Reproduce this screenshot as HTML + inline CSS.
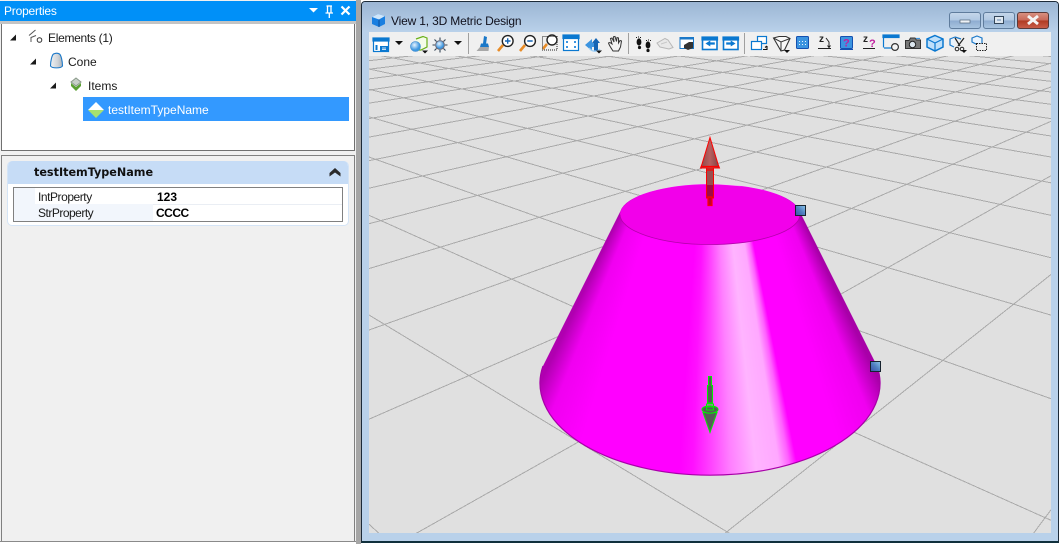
<!DOCTYPE html>
<html><head><meta charset="utf-8"><title>View 1, 3D Metric Design</title>
<style>
html,body{margin:0;padding:0;background:#fff;width:1059px;height:544px;overflow:hidden}
#root{position:relative;width:1059px;height:544px;overflow:hidden;background:#fff;font:12px "Liberation Sans",sans-serif;color:#1a1a1a}
#root div{position:absolute;box-sizing:border-box}
.t{white-space:nowrap;line-height:16px;height:16px}
svg{position:absolute;left:0;top:0}
</style></head><body>
<div id="root">
<!-- left panel -->
<div style="left:0;top:0;width:356px;height:542px;background:#f0f0f0;border-bottom:1px solid #8a8a8a"></div>
<div style="left:0;top:1px;width:356px;height:20px;background:#0090f8"></div>
<div class="t" style="left:4px;top:3px;color:#fff;letter-spacing:-.2px">Properties</div>
<div style="left:0;top:21px;width:356px;height:3px;background:#c4c4c4"></div>
<div style="left:1px;top:24px;width:354px;height:127px;background:#fff;border:1px solid #707070;border-top:0"></div>
<div style="left:83px;top:97px;width:266px;height:24px;background:#3399ff"></div>
<div class="t" style="left:48px;top:30px;letter-spacing:-.3px">Elements (1)</div>
<div class="t" style="left:68px;top:54px">Cone</div>
<div class="t" style="left:88px;top:78px">Items</div>
<div class="t" style="left:108px;top:102px;color:#fff">testItemTypeName</div>
<div style="left:1px;top:155px;width:354px;height:386px;background:#f0f0f0;border:1px solid #808080;border-bottom:0"></div>
<div style="left:7px;top:161px;width:342px;height:65px;background:#fff;border:1px solid #d4e4f6;border-radius:5px"></div>
<div style="left:8px;top:161px;width:340px;height:23px;background:#c6dcf6;border-radius:5px 5px 0 0"></div>
<div class="t" style="left:34px;top:165px;font:bold 11.2px/16px 'DejaVu Sans',sans-serif;color:#111">testItemTypeName</div>
<div style="left:13px;top:187px;width:330px;height:35px;border:1px solid #808080;background:#fff"></div>
<div style="left:14px;top:188px;width:21px;height:33px;background:#f2f6fc"></div>
<div style="left:35px;top:204px;width:118px;height:17px;background:#f2f6fc"></div>
<div style="left:153px;top:204px;width:189px;height:1px;background:#eaeef4"></div>
<div class="t" style="left:38px;top:189px;letter-spacing:-.45px">IntProperty</div>
<div class="t" style="left:38px;top:205px;letter-spacing:-.5px">StrProperty</div>
<div class="t" style="left:157px;top:189px;font-weight:bold;color:#000">123</div>
<div class="t" style="left:156px;top:205px;font-weight:bold;color:#000;letter-spacing:-.5px">CCCC</div>
<!-- gap -->
<div style="left:356px;top:0;width:5px;height:544px;background:#a6a6a6"></div>
<!-- window -->
<div style="left:361px;top:1px;width:698px;height:542px;border:1px solid #1c2a38;border-bottom:2px solid #10303c;border-radius:4px 4px 0 0;background:#b9d1ea"></div>
<div style="left:362px;top:2px;width:696px;height:30px;background:linear-gradient(#9cb6d4,#b9d1ea);border-radius:3px 3px 0 0"></div>
<div class="t" style="left:391px;top:13px;color:#10101c;letter-spacing:-.17px">View 1, 3D Metric Design</div>
<div style="left:949px;top:12px;width:32px;height:17px;border:1px solid #5f7c9c;border-radius:3px;background:linear-gradient(#c4d6ea 0,#b0c8e2 48%,#8eacd0 52%,#a8c4e0 100%)"></div>
<div style="left:983px;top:12px;width:32px;height:17px;border:1px solid #5f7c9c;border-radius:3px;background:linear-gradient(#c4d6ea 0,#b0c8e2 48%,#8eacd0 52%,#a8c4e0 100%)"></div>
<div style="left:1017px;top:12px;width:32px;height:17px;border:1px solid #5a3a3a;border-radius:3px;background:linear-gradient(#d89080 0,#c86858 48%,#b03a22 52%,#c85c48 100%)"></div>
<div style="left:369px;top:32px;width:682px;height:24px;background:#f0f0f0"></div>
<div style="left:369px;top:56px;width:682px;height:477px;background:#e0e0e0"></div>
<!-- grid -->
<svg width="1059" height="544" style="clip-path:inset(56px 8px 11px 369px)">
<g stroke="#aaaaaa" stroke-width="1" fill="none" shape-rendering="crispEdges">
<path d="M369 524.1L386 540M369 315L740.5 540M369 215.3L1051 520.3M369 157L1051 398.7M369 116.8L1051 315.1M369 89.3L1051 257.7M369 69L1051 215.3M369 53.4L1051 182.8M369 41L1051 157M369 30.9L1051 136M369 22.6L1051 118.6M369 15.7L1051 104.3M369 9.8L1051 92M369 4.7L1051 81.3M369 .2L1051 72M369 -3.7L1051 63.8M369 -7.2L1051 56.5"/>
<path d="M1028.5 540L1051 509.8M716.5 540L1051 274.5M404.4 540L1051 175.7M369 419.2L1051 121.3M369 330L1051 87M369 268.6L1051 63.2M369 223.7L1051 45.9M369 188.2L1051 32.2M369 160.7L1051 21.6M369 137.1L1051 12.4M369 118.6L1051 5.3M369 103.1L1051 -.7M369 90L1051 -5.7M369 78.9L1051 -10M369 69.2L1051 -13.8M369 60.7L1051 -17"/>
</g></svg>
<!-- cone body -->
<div style="left:0;top:0;width:1059px;height:544px;clip-path:path('M620.5 211L543 366A170 92 0 1 0 877 366L799.5 211A90 30 0 0 0 620.5 211Z');background:conic-gradient(from 150deg at 710px 24px,#a800a8 4.67deg,#f000f0 7.8deg,#ff00ff 12.9deg,#ff00ff 18.8deg,#ff60ff 19.8deg,#ffa8ff 21.1deg,#ffb4ff 24.1deg,#ff80ff 27.3deg,#ff40ff 30deg,#ff10ff 32.2deg,#ff00ff 34deg,#ff00ff 47.1deg,#f000f0 52.2deg,#b000b0 55.3deg)"></div>
<svg width="1059" height="544">
<defs>
<linearGradient id="h" x1="0" x2="1" y1="1" y2="0"><stop offset="0" stop-color="#3a50a8"/><stop offset=".5" stop-color="#4f80c0"/><stop offset="1" stop-color="#8cc8ec"/></linearGradient>
<radialGradient id="s" cx=".4" cy=".35"><stop offset="0" stop-color="#e8f4ff"/><stop offset="1" stop-color="#3d96e0"/></radialGradient>
<linearGradient id="ra" x1="0" x2="1"><stop offset="0" stop-color="#8a4848"/><stop offset=".5" stop-color="#b86060"/><stop offset="1" stop-color="#7c4040"/></linearGradient>
<linearGradient id="cn" x1="0" x2="1"><stop offset="0" stop-color="#f0f2f4"/><stop offset=".6" stop-color="#d0d4d8"/><stop offset="1" stop-color="#a8b0b8"/></linearGradient>
</defs>
<path d="M543 366A170 92 0 1 0 877 366" fill="none" stroke="#a800a8" stroke-width="1.2"/>
<ellipse cx="710" cy="214.5" rx="90" ry="30" fill="#f200ea"/>
<path d="M620 214.5A90 30 0 0 0 800 214.5" fill="none" stroke="#b400ac" stroke-width=".8"/>
<rect x="795.5" y="205.5" width="10" height="10" fill="url(#h)" stroke="#16222e"/>
<rect x="870.5" y="361.5" width="10" height="10" fill="url(#h)" stroke="#16222e"/>
<!-- red arrow -->
<path d="M706.5 168H713.5V198H706.5Z" fill="#985050" stroke="#f00" stroke-width="1"/>
<path d="M707 185H713V198H707Z" fill="#a00848" />
<path d="M708 197H712V205.5H708Z" fill="#c00030" stroke="#f00" stroke-width="1.2"/>
<path d="M710 137.5L718 164L719.5 168H700.5L702 164Z" fill="url(#ra)" stroke="#f00" stroke-width="1"/>
<path d="M701 166.5H719M706 170H714" stroke="#f00" stroke-width="1.2" fill="none"/>
<!-- green arrow -->
<path d="M708.5 376.5H711.5V385.5H712.5V403H707.5V385.5H708.5Z" fill="#585858" stroke="#0e0" stroke-width="1"/>
<path d="M703 412.5L710 432.5L717 412.5Z" fill="#585858" stroke="#0e0" stroke-width="1"/>
<ellipse cx="710" cy="409.5" rx="8" ry="3.7" fill="#585858" stroke="#0e0" stroke-width="1"/>
<path d="M706.5 404H713.5V410H706.5ZM707 407H713" fill="none" stroke="#0e0" stroke-width="1"/>

<!-- panel icons -->
<path d="M10 40.5H16V34.5ZM30 64.5H36V58.5ZM50 88.5H56V82.5Z" fill="#1a1a1a"/>
<path d="M29 35.5L35.5 30M31 42V37.5L36 35.5" fill="none" stroke="#555" stroke-width="1"/>
<circle cx="39.5" cy="40" r="2.3" fill="#fff" stroke="#333"/>
<path d="M50.5 66C50.5 61 52 55 53.5 54C55.5 53 58 53 59.5 54C61 55 62.5 61 62.5 66C61 68.5 52 68.5 50.5 66Z" fill="url(#cn)" stroke="#1b78c8" stroke-width="1.1"/>
<path d="M76 78L81 82L76 86L71 82Z" fill="#c8d0c8" stroke="#8a9a8a"/>
<path d="M71 83L76 87L81 83L81 86L76 91L71 86Z" fill="#5aa032"/>
<path d="M96 102L104 110H88Z" fill="#fff"/>
<path d="M88 110H104L96 118Z" fill="#a8e070"/>
<!-- header icons -->
<path d="M309 8H318L313.5 12.5Z" fill="#fff"/>
<path d="M326.5 6H332M327.5 6V13H331V6M325.5 13H333M329.3 13V18" fill="none" stroke="#fff" stroke-width="1.3"/>
<path d="M341.5 6.5L349.5 14.5M349.5 6.5L341.5 14.5" stroke="#fff" stroke-width="2.2"/>
<path d="M329.5 173L335 168L340.5 173V176.5L335 172.5L329.5 176.5Z" fill="#2a2a2a"/>
<!-- title icon -->
<path d="M372 17L378 14L385 16V24L379 27L372 24Z" fill="#1a7fe0"/>
<path d="M372 17L379 19.5L385 16L378 14Z" fill="#cfe6fa"/>
<path d="M379 19.5V27" stroke="#0c4f9c"/>
<!-- window buttons glyphs -->
<rect x="960" y="20" width="10" height="3" fill="#eef2f6" stroke="#506478" stroke-width=".7"/>
<rect x="994.5" y="16.5" width="9" height="7" fill="#dfe8f0" stroke="#33465a" stroke-width="1"/>
<rect x="997" y="19" width="4" height="2" fill="#9fb6d0"/>
<path d="M1028 16L1038 24M1038 16L1028 24" stroke="#f4f4f4" stroke-width="3"/>
<!-- separators -->
<path d="M468.5 33V54M628.5 33V54M744.5 33V54" stroke="#a0a0a0"/>

<!-- toolbar icons -->
<g fill="none" stroke="#0a78d0" stroke-width="1.2">
<rect x="373.5" y="38.5" width="15" height="13" fill="#fff"/>
<rect x="373" y="38" width="16" height="3" fill="#0a78d0"/>
<rect x="563.5" y="35.5" width="15" height="15" fill="#fff"/>
<rect x="563" y="35" width="16" height="3.5" fill="#0a78d0"/>
<rect x="702.5" y="38.5" width="14.5" height="11" fill="#fff" stroke-width="1.6"/>
<rect x="702" y="37" width="15.5" height="3" fill="#0a78d0"/>
<rect x="723.5" y="38.5" width="14.5" height="11" fill="#fff" stroke-width="1.6"/>
<rect x="723" y="37" width="15.5" height="3" fill="#0a78d0"/>
<rect x="757.5" y="36.5" width="9" height="7" fill="#fff"/>
<rect x="751.5" y="41.5" width="10" height="8" fill="#fff"/>
<path d="M883.5 47.5V36H899M884 48H892" />
<rect x="883" y="35" width="16" height="2.5" fill="#0a78d0"/>
</g>
<path d="M380 46h8v5h-8z" fill="#0a78d0"/>
<path d="M376.5 45v5" stroke="#0a78d0" stroke-width="2"/>
<path d="M382 48h4M382 49.6h4" stroke="#fff" stroke-width=".8"/>
<path d="M395 41H403L399 45ZM454 41H462L458 45Z" fill="#111"/>
<!-- cube and sphere -->
<path d="M416 39L423 36.5L427 38V47L421 50H416" fill="#f4fbe8" stroke="#68b018" stroke-width="1.2"/>
<circle cx="415.5" cy="46.5" r="5" fill="url(#s)" stroke="#3d8ad0" stroke-width=".6"/>
<path d="M422 50.5H428L425 53.5Z" fill="#111"/>
<!-- light -->
<circle cx="440" cy="45" r="4.4" fill="url(#s)" stroke="#667"/>
<path d="M440 37.5V40M440 50V52.5M432.5 45H435M445 45H447.5M434.5 39.5L436.5 41.5M443.5 48.5L445.5 50.5M445.5 39.5L443.5 41.5M436.5 48.5L434.5 50.5" stroke="#345" stroke-width="1.1"/>
<!-- brush -->
<path d="M484 36L487 37L486 44L483 43.5Z" fill="#1b78c8"/>
<path d="M481 43.5H488L489 47H480Z" fill="#1b78c8"/>
<path d="M480 47H489L488.5 51H476.5Z" fill="#a8a8a8"/>
<!-- zooms -->
<path d="M503 45L498 51M525 45L520 51M547 44L542.8 49" stroke="#e88c28" stroke-width="2.6"/>
<circle cx="507.7" cy="41" r="5.4" fill="#fff" stroke="#222" stroke-width="1.4"/>
<circle cx="530" cy="41" r="5.4" fill="#fff" stroke="#222" stroke-width="1.4"/>
<circle cx="552" cy="40" r="5" fill="#fff" stroke="#222" stroke-width="1.4"/>
<path d="M505 41H510.5M507.7 38.3V43.7M527.3 41H532.7" stroke="#1464b4" stroke-width="1.4"/>
<rect x="542.5" y="36.5" width="14.5" height="13.5" fill="none" stroke="#222" stroke-dasharray="1 1"/>
<path d="M566 41h2v2h-2zM574 41h2v2h-2zM566 46h2v2h-2zM574 46h2v2h-2z" fill="#3c94e0"/>
<!-- rotate -->
<path d="M585 45L592 39V43H596V47H592V51Z" fill="#3c94e0"/>
<path d="M596 38L600 43H598V51H594V43H592Z" fill="#1464b4"/>
<path d="M589 48C592 52 597 52 600 49" fill="none" stroke="#9ccdf4" stroke-width="1.4"/>
<path d="M596 50.5H602L599 53.5Z" fill="#111"/>
<!-- hand -->
<path d="M613 51C611 48 609 45 608.5 43L610 42.5L612 44L610.5 38.5L612 38L614 42L613.5 36.8L615 36.5L616.5 41.5L617 37.5L618.5 38L618.5 43L620 40.5L621.5 41L620.5 47L618.5 51Z" fill="#f4f4f4" stroke="#333" stroke-width="1"/>
<!-- feet -->
<g fill="#111">
<ellipse cx="639" cy="42" rx="2.4" ry="3.6"/><ellipse cx="639.5" cy="47.5" rx="1.6" ry="1.6"/>
<ellipse cx="648" cy="45" rx="2.4" ry="3.6"/><ellipse cx="648" cy="50.5" rx="1.6" ry="1.6"/>
<path d="M636 37h1v1h-1zM638 36.5h1v1h-1zM640 37h1v1h-1zM646 40h1v1h-1zM648 39.5h1v1h-1zM650 40h1v1h-1z"/>
</g>
<!-- shoe -->
<path d="M657 43L665 38.5L668 40L673 47.5L669 49L660 47Z" fill="#e8e8e8" stroke="#b8b8b8"/>
<path d="M661 44L667 42" stroke="#c8c8c8"/>
<!-- window cam -->
<rect x="680" y="37.5" width="13.5" height="11" fill="#fff" stroke="#1b78c8"/>
<rect x="680" y="37" width="14" height="2.5" fill="#1b78c8"/>
<path d="M684 45L689 42H693V48L688 50L684 48Z" fill="#333"/>
<!-- arrows -->
<path d="M706 43.5L710 41V42.7H714.5V44.3H710V46Z" fill="#0a78d0" stroke="#0a78d0" stroke-width=".6"/>
<path d="M735 43.5L731 41V42.7H726.5V44.3H731V46Z" fill="#0a78d0" stroke="#0a78d0" stroke-width=".6"/>
<path d="M763 49.5H767V46M765 47.5L767 46" fill="none" stroke="#111" stroke-width="1.1"/>
<!-- perspective -->
<path d="M773.5 38L779 36.5H786L790 38.5L784.5 50L781 51Z" fill="#f8f8f8" stroke="#333" stroke-width="1.1"/>
<path d="M773.5 38L781 42L790 38.5M781 42V50.5" fill="none" stroke="#333" stroke-width="1"/>
<path d="M784 50H790L787 53Z" fill="#111"/>
<!-- blue square -->
<rect x="796.5" y="36.5" width="12" height="12" rx="1" fill="#3c94e0" stroke="#1450b0"/>
<path d="M799 41h1v1h-1zM802 41h1v1h-1zM805 41h1v1h-1zM799 44h1v1h-1zM802 44h1v1h-1zM805 44h1v1h-1z" fill="#eaf4ff"/>
<text x="819" y="42" font-family="Liberation Sans" font-weight="bold" font-size="10" fill="#222">z</text>
<path d="M826 38L829 42V47M827.5 45.5L829 47.5L830.5 45.5M818 48.5H831" fill="none" stroke="#222"/>
<rect x="840.5" y="36.5" width="12" height="12" rx="1" fill="#3c94e0" stroke="#1450b0"/>
<text x="843" y="46.5" font-family="Liberation Sans" font-weight="bold" font-size="11" fill="#c020a0">?</text>
<path d="M840 49.5H853" stroke="#1450b0"/>
<text x="863" y="42" font-family="Liberation Sans" font-weight="bold" font-size="10" fill="#222">z</text>
<text x="869" y="47" font-family="Liberation Sans" font-weight="bold" font-size="11" fill="#c020a0">?</text>
<path d="M863 48.5H875" stroke="#222"/>
<circle cx="895" cy="47" r="3.4" fill="#f4f4f4" stroke="#333" stroke-width="1.2"/>
<!-- camera -->
<path d="M905.5 40.5H909L910.5 38H915L916.5 40H920.5V48.5H905.5Z" fill="#777" stroke="#333"/>
<circle cx="912.5" cy="44.5" r="3.2" fill="#dce6ee" stroke="#222"/>
<path d="M916 38.5H920" stroke="#3c94e0" stroke-width="1.2"/>
<!-- cube -->
<path d="M935 35.5L943 39V47L935 51L927 47V39Z" fill="#bfe0fa" stroke="#0a78d0" stroke-width="1.5"/>
<path d="M927 39L935 43L943 39M935 43V51" fill="none" stroke="#0a78d0" stroke-width="1.2"/>
<!-- cube scissors -->
<path d="M955 37L961 39M955 37L950 39V45L954 47" fill="#eaf4fe" stroke="#1b78c8" stroke-width="1.2"/>
<path d="M955 38L960 46M964 38L958 46" stroke="#222" stroke-width="1.2"/>
<circle cx="957" cy="49" r="1.8" fill="none" stroke="#222"/><circle cx="962" cy="49" r="1.8" fill="none" stroke="#222"/>
<path d="M961 50H967L964 53Z" fill="#111"/>
<!-- cube dashed -->
<path d="M977 36L982 38V44H976L972 42V38Z" fill="#eaf4fe" stroke="#1b78c8" stroke-width="1.2"/>
<rect x="976.5" y="43.5" width="10" height="7" fill="#f0f0f0" stroke="#222" stroke-dasharray="1.5 1"/>
</svg>
</div>
</body></html>
